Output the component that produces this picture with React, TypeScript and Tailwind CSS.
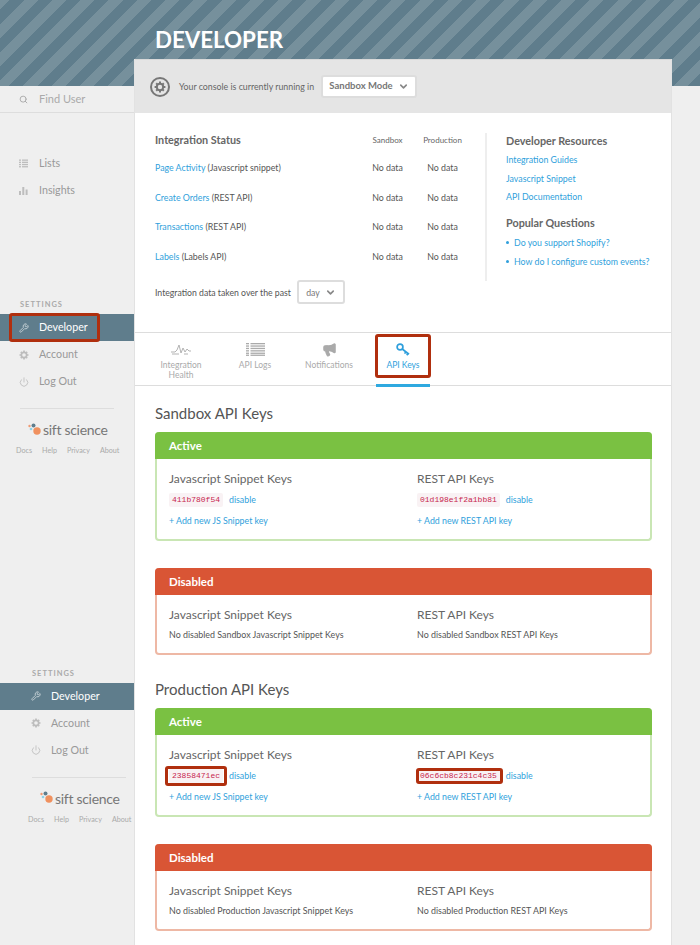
import React from "react";
import { Search, Wrench, Power, ChevronDown, Megaphone } from "lucide-react";

function Gear({ size, color }: { size: number; color: string }) {
  const teeth = [0, 45, 90, 135];
  return (
    <svg width={size} height={size} viewBox="0 0 12 12" fill="none" stroke={color}>
      <circle cx="6" cy="6" r="3.2" strokeWidth="2" />
      {teeth.map((a) => (
        <line key={a} x1="6" y1="0.6" x2="6" y2="11.4" strokeWidth="2" transform={`rotate(${a} 6 6)`} strokeDasharray="2 6.8" />
      ))}
    </svg>
  );
}

function ListIcon() {
  return (
    <svg width="9" height="9" viewBox="0 0 9 9" className="text-[#bdbdbd]" fill="currentColor">
      <rect x="0" y="0.5" width="2" height="1.3" /><rect x="3" y="0.5" width="6" height="1.3" />
      <rect x="0" y="2.7" width="2" height="1.3" /><rect x="3" y="2.7" width="6" height="1.3" />
      <rect x="0" y="4.9" width="2" height="1.3" /><rect x="3" y="4.9" width="6" height="1.3" />
      <rect x="0" y="7.1" width="2" height="1.3" /><rect x="3" y="7.1" width="6" height="1.3" />
    </svg>
  );
}

function BarsIcon() {
  return (
    <svg width="9" height="9" viewBox="0 0 9 9" className="text-[#bdbdbd]" fill="currentColor">
      <rect x="0" y="5" width="2" height="4" /><rect x="3.3" y="1" width="2" height="8" /><rect x="6.6" y="3.5" width="2" height="5.5" />
    </svg>
  );
}

function Logo() {
  return (
    <div className="flex items-center gap-[1px] whitespace-nowrap">
      <svg width="14" height="14" viewBox="0 0 14 14" className="shrink-0">
        <circle cx="5.5" cy="2.5" r="2" fill="#5f7d8c" />
        <circle cx="1.5" cy="3" r="1.2" fill="#ef9a73" />
        <circle cx="3" cy="6" r="1.3" fill="#8fd3e8" />
        <circle cx="9" cy="8" r="3.7" fill="#f0915f" />
      </svg>
      <span className="text-[14px] leading-[15px] tracking-[-0.3px] text-[#777]">sift science</span>
    </div>
  );
}

function SettingsBlock({ offset, headOffset, logoOffset, footOffset }: { offset: string; headOffset: string; logoOffset: string; footOffset: string }) {
  const row = "flex items-center h-[27px] text-[10.7px]";
  return (
    <div>
      <div className={`${headOffset} text-[7.5px] font-bold tracking-[1px] text-[#aaa] h-[14px] mb-[2px] flex items-center`}>SETTINGS</div>
      <div className={`${row} ${offset} bg-[#5f7d8c] text-white`}>
        <Wrench className="w-[10px] h-[10px] text-[#cfd8dc] mr-[10px]" />
        Developer
      </div>
      <div className={`${row} ${offset} text-[#999]`}>
        <span className="w-[10px] mr-[10px] flex"><Gear size={10} color="#bdbdbd" /></span>
        Account
      </div>
      <div className={`${row} ${offset} text-[#999]`}>
        <Power className="w-[10px] h-[10px] text-[#bdbdbd] mr-[10px]" />
        Log Out
      </div>
      <div className={headOffset}>
        <div className="w-[94px] h-px bg-[#ddd] mt-[13px]" />
      </div>
      <div className={`${logoOffset} mt-[13px]`}>
        <Logo />
      </div>
      <div className={`${footOffset} mt-[9px] flex gap-[10px] text-[7.2px] text-[#aaa] whitespace-nowrap`}>
        <span>Docs</span><span>Help</span><span>Privacy</span><span>About</span>
      </div>
    </div>
  );
}

function Sidebar() {
  return (
    <aside className="w-[134px] shrink-0 relative">
      <div className="h-[27px] border-b border-[#ddd] flex items-center pl-[19px] text-[11px] text-[#aaa]">
        <Search className="w-[9px] h-[9px] mr-[11px] text-[#aaa]" strokeWidth={2.5} />
        Find User
      </div>
      <div className="mt-[37px] pl-[19px] flex items-center h-[27px] text-[10.7px] text-[#999]">
        <span className="mr-[11px] flex"><ListIcon /></span>Lists
      </div>
      <div className="pl-[19px] flex items-center h-[27px] text-[10.7px] text-[#999]">
        <span className="mr-[11px] flex"><BarsIcon /></span>Insights
      </div>
      <div className="mt-[94px]">
        <SettingsBlock offset="pl-[19px]" headOffset="pl-[20px]" logoOffset="pl-[28px]" footOffset="pl-[16px]" />
      </div>
      <div className="mt-[210px]">
        <SettingsBlock offset="pl-[31px]" headOffset="pl-[32px]" logoOffset="pl-[40px]" footOffset="pl-[28px]" />
      </div>
      <div className="absolute left-[9px] top-[227px] w-[91px] h-[29px] border-[3px] border-[#b02f0e] rounded-[3px]" />
    </aside>
  );
}

function SelectBox({ label, className }: { label: string; className: string }) {
  return (
    <div className={`flex items-center justify-center gap-[5px] bg-white border-2 border-[#ddd] rounded-[3px] text-[#777] shrink-0 ${className}`}>
      {label}
      <ChevronDown className="w-[11px] h-[11px] text-[#888]" strokeWidth={3.5} />
    </div>
  );
}

function StatusRow({ name, rest }: { name: string; rest: string }) {
  return (
    <div className="flex items-center h-[29.6px] text-[8.8px] text-[#555]">
      <div className="w-[205px]">
        <span className="text-[#2f9fdc]">{name}</span> {rest}
      </div>
      <div className="w-[55px] text-center">No data</div>
      <div className="w-[55px] text-center">No data</div>
    </div>
  );
}

function Bullet({ children, className }: { children: React.ReactNode; className?: string }) {
  return (
    <li className={`flex items-center whitespace-nowrap ${className ?? ""}`}>
      <span className="w-[3px] h-[3px] rounded-full bg-[#2f9fdc] mr-[5px] shrink-0" />
      {children}
    </li>
  );
}

function Status() {
  return (
    <div className="flex pt-[20px] pl-[20px] h-[220px] border-b border-[#ddd]">
      <div className="w-[330px] shrink-0">
        <div className="flex items-center h-[14px]">
          <div className="w-[205px] text-[10.8px] font-bold text-[#666]">Integration Status</div>
          <div className="w-[55px] text-center text-[8px] text-[#666]">Sandbox</div>
          <div className="w-[55px] text-center text-[8px] text-[#666]">Production</div>
        </div>
        <div className="mt-[6px]">
          <StatusRow name="Page Activity" rest="(Javascript snippet)" />
          <StatusRow name="Create Orders" rest="(REST API)" />
          <StatusRow name="Transactions" rest="(REST API)" />
          <StatusRow name="Labels" rest="(Labels API)" />
        </div>
        <div className="flex items-center mt-[9px] text-[8.7px] text-[#555]">
          <span className="w-[142px] whitespace-nowrap">Integration data taken over the past</span>
          <SelectBox label="day" className="w-[48px] h-[24px]" />
        </div>
      </div>
      <div className="border-l-2 border-[#eee] h-[148px] pl-[19px] text-[8.8px] leading-[13px] text-[#2f9fdc]">
        <div className="text-[10.8px] h-[14px] flex items-center font-bold text-[#666] whitespace-nowrap">Developer Resources</div>
        <div className="mt-[6px]">Integration Guides</div>
        <div className="mt-[5.5px]">Javascript Snippet</div>
        <div className="mt-[5.5px]">API Documentation</div>
        <div className="mt-[12.5px] h-[14px] flex items-center text-[10.8px] font-bold text-[#666]">Popular Questions</div>
        <ul className="mt-[6px]">
          <Bullet>Do you support Shopify?</Bullet>
          <Bullet className="mt-[6px]">How do I configure custom events?</Bullet>
        </ul>
      </div>
    </div>
  );
}

function HealthIcon() {
  return (
    <svg width="20" height="14" viewBox="0 0 20 14" fill="none" stroke="#aaa" strokeWidth="0.9">
      <path d="M0 9h4l2-2 2-5 2 8 2-5 2 4 2-3 2 2h2" />
      <path d="M1 11h7M13 11h4" />
    </svg>
  );
}

function LogsIcon() {
  return (
    <svg width="19" height="13" viewBox="0 0 19 13" fill="#aaa">
      {[0, 2.4, 4.8, 7.2, 9.6, 11.6].map((y) => (
        <g key={y}>
          <rect x="0" y={y} width="3" height="1.3" />
          <rect x="4.5" y={y} width="14.5" height="1.3" />
        </g>
      ))}
    </svg>
  );
}

function KeyIcon() {
  return (
    <svg width="14" height="13" viewBox="0 0 14 13" fill="none" stroke="#2f9fdc" strokeWidth="1.7">
      <circle cx="4" cy="4" r="2.9" />
      <path d="M6.2 6 13 11.2M9.8 8.8 8.6 10.6M12 10.4 10.8 12.2" />
    </svg>
  );
}

function Tab({ icon, label, active }: { icon: React.ReactNode; label: string; active?: boolean }) {
  return (
    <div className={`w-[74px] flex flex-col items-center pt-[9px] text-[8.5px] leading-[10px] text-center ${active ? "text-[#2f9fdc]" : "text-[#aaa]"}`}>
      <div className="h-[15px] flex items-center justify-center">{icon}</div>
      <div className="mt-[3px] w-[50px]">{label}</div>
    </div>
  );
}

function Tabs() {
  return (
    <div className="relative flex h-[53px] pl-[9px] border-b border-[#ddd]">
      <Tab icon={<HealthIcon />} label="Integration Health" />
      <Tab icon={<LogsIcon />} label="API Logs" />
      <Tab icon={<Megaphone className="w-[15px] h-[15px] text-[#aaa]" fill="#aaa" />} label="Notifications" />
      <Tab icon={<KeyIcon />} label="API Keys" active />
      <div className="absolute left-[241px] bottom-[-2px] w-[54px] h-[3px] bg-[#2fa9e0]" />
      <div className="absolute left-[240px] top-[1px] w-[56px] h-[44px] border-[3px] border-[#b02f0e] rounded-[3px]" />
    </div>
  );
}

function KeyChip({ value, box }: { value: string; box?: string }) {
  return (
    <span className="relative font-['Liberation_Mono',monospace] text-[8px] text-[#c7254e] bg-[#f9f2f4] rounded-[2px] px-[3px] py-[2px] leading-[10px]">
      {value}
      {box && <span className={`absolute border-[3px] border-[#b02f0e] rounded-[3px] ${box}`} />}
    </span>
  );
}

function KeyCol({ title, value, addLabel, box }: { title: string; value: string; addLabel: string; box?: string }) {
  return (
    <div className="w-[248px] shrink-0">
      <div className="text-[12px] h-[14px] flex items-center text-[#666]">{title}</div>
      <div className="mt-[7px] h-[14px] flex items-center gap-[6px]">
        <KeyChip value={value} box={box} />
        <span className="text-[8.8px] text-[#2f9fdc]">disable</span>
      </div>
      <div className="mt-[7px] h-[14px] flex items-center text-[8.8px] text-[#2f9fdc]">{addLabel}</div>
    </div>
  );
}

function EmptyCol({ title, text }: { title: string; text: string }) {
  return (
    <div className="w-[248px] shrink-0">
      <div className="text-[12px] h-[14px] flex items-center text-[#666]">{title}</div>
      <div className="mt-[6px] h-[14px] flex items-center text-[8.9px] text-[#555]">{text}</div>
    </div>
  );
}

function ActivePanel({ js, rest, jsBox, restBox }: { js: string; rest: string; jsBox?: string; restBox?: string }) {
  return (
    <div className="rounded-[4px] border-2 border-t-0 border-[#c9e6b4] h-[109px]">
      <div className="-mx-[2px] h-[27px] bg-[#7ac142] rounded-t-[4px] flex items-center pl-[14px] text-[11.5px] font-bold text-white">Active</div>
      <div className="flex pl-[12px] pt-[13px]">
        <KeyCol title="Javascript Snippet Keys" value={js} addLabel="+ Add new JS Snippet key" box={jsBox} />
        <KeyCol title="REST API Keys" value={rest} addLabel="+ Add new REST API key" box={restBox} />
      </div>
    </div>
  );
}

function DisabledPanel({ kind }: { kind: string }) {
  return (
    <div className="mt-[27px] rounded-[4px] border-2 border-t-0 border-[#eeb8a5] h-[87px]">
      <div className="-mx-[2px] h-[27px] bg-[#d95535] rounded-t-[4px] flex items-center pl-[14px] text-[11.5px] font-bold text-white">Disabled</div>
      <div className="flex pl-[12px] pt-[13px]">
        <EmptyCol title="Javascript Snippet Keys" text={`No disabled ${kind} Javascript Snippet Keys`} />
        <EmptyCol title="REST API Keys" text={`No disabled ${kind} REST API Keys`} />
      </div>
    </div>
  );
}

export default function App() {
  return (
    <div className="w-[700px] h-[945px] overflow-hidden bg-[#efefef] font-['Lato',sans-serif]">
      <header className="h-[86px] bg-[repeating-linear-gradient(135deg,#76909c_0,#76909c_7px,#5f7d8c_7px,#5f7d8c_17px,#76909c_17px,#76909c_20px)] pl-[155px] pt-[27px]">
        <h1 className="text-[22.3px] leading-[26px] font-bold text-white">DEVELOPER</h1>
      </header>
      <div className="flex">
        <Sidebar />
        <main className="w-[538px] h-[886px] -mt-[27px] bg-white border-x border-[#e2e2e2] shrink-0">
          <div className="h-[54px] bg-[#e5e5e5] border-t border-[#d9d9d9] flex items-center pl-[15px] text-[8.8px] text-[#666]">
            <div className="w-[20px] h-[20px] rounded-full border-2 border-[#777] flex items-center justify-center">
              <Gear size={12} color="#777" />
            </div>
            <span className="ml-[9px] w-[142px] whitespace-nowrap">Your console is currently running in</span>
            <SelectBox label="Sandbox Mode" className="w-[96px] h-[23px] text-[9.5px] font-bold" />
          </div>
          <Status />
          <Tabs />
          <div className="pl-[20px] pr-[19px]">
            <h2 className="text-[15px] leading-[18px] mt-[18px] mb-[10px] text-[#555]">Sandbox API Keys</h2>
            <ActivePanel js="411b780f54" rest="01d198e1f2a1bb81" />
            <DisabledPanel kind="Sandbox" />
            <h2 className="text-[15px] leading-[18px] mt-[25px] mb-[10px] text-[#555]">Production API Keys</h2>
            <ActivePanel
              js="23858471ec"
              rest="06c6cb8c231c4c35"
              jsBox="-left-[4px] -right-[4px] -top-[3px] -bottom-[3px]"
              restBox="-left-[1px] -right-[3px] -top-[1px] -bottom-[1px]"
            />
            <DisabledPanel kind="Production" />
          </div>
        </main>
      </div>
    </div>
  );
}
